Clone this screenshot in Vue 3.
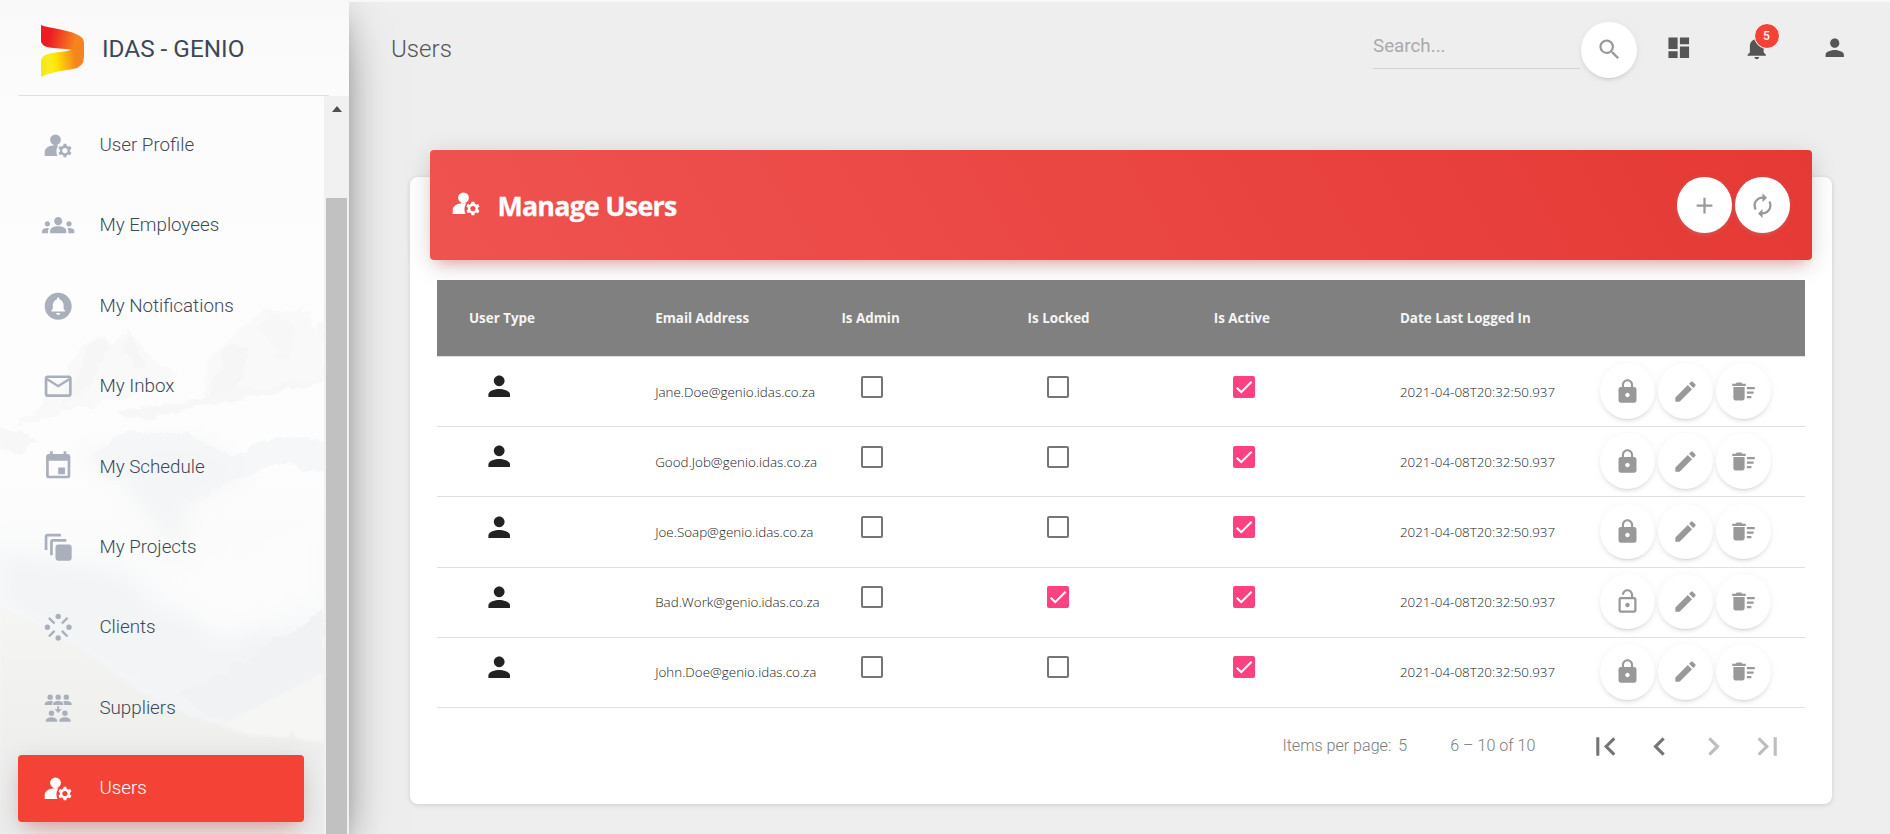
<script setup>
const icons = {
  manage: 'M10 12c-.22 0-.42-.03-.64-.03C6.6 11.97 2 13.4 2 17v3h9.54A6.9 6.9 0 0 1 10.7 16.5c0-1.6.55-3.1 1.45-4.28C11.4 12.06 10.7 12 10 12zM10 4a4 4 0 1 0 0 8 4 4 0 0 0 0-8zM20.75 16c0-.22-.03-.42-.06-.63l1.14-1.01-1-1.73-1.45.49c-.32-.27-.68-.48-1.08-.63L18 11h-2l-.3 1.49c-.4.15-.76.36-1.08.63l-1.45-.49-1 1.73 1.14 1.01c-.03.21-.06.41-.06.63s.03.42.06.63l-1.14 1.01 1 1.73 1.45-.49c.32.27.68.48 1.08.63L16 21h2l.3-1.49c.4-.15.76-.36 1.08-.63l1.45.49 1-1.73-1.14-1.01c.03-.21.06-.41.06-.63zM17 18c-1.1 0-2-.9-2-2s.9-2 2-2 2 .9 2 2-.9 2-2 2z',
  groups: 'M12 12.75c1.63 0 3.07.39 4.24.9 1.08.48 1.76 1.56 1.76 2.73V18H6v-1.61c0-1.18.68-2.26 1.76-2.73 1.17-.52 2.61-.91 4.24-.91zM4 13c1.1 0 2-.9 2-2s-.9-2-2-2-2 .9-2 2 .9 2 2 2zm1.13 1.1c-.37-.06-.74-.1-1.13-.1-.99 0-1.93.21-2.78.58A2.01 2.01 0 0 0 0 16.43V18h4.5v-1.61c0-.83.23-1.61.63-2.29zM20 13c1.1 0 2-.9 2-2s-.9-2-2-2-2 .9-2 2 .9 2 2 2zm4 3.43c0-.81-.48-1.53-1.22-1.85A6.95 6.95 0 0 0 20 14c-.39 0-.76.04-1.13.1.4.68.63 1.46.63 2.29V18H24v-1.57zM12 6c1.66 0 3 1.34 3 3s-1.34 3-3 3-3-1.34-3-3 1.34-3 3-3z',
  notify: 'M12 2C6.48 2 2 6.48 2 12s4.48 10 10 10 10-4.48 10-10S17.52 2 12 2zm0 16.5c-.83 0-1.5-.67-1.5-1.5h3c0 .83-.67 1.5-1.5 1.5zm5-2.5H7v-1l1-1v-2.61C8 9.27 9.03 7.47 11 7v-.5c0-.57.43-1 1-1s1 .43 1 1V7c1.97.47 3 2.28 3 4.39V14l1 1v1z',
  mail: 'M20 4H4c-1.1 0-1.99.9-1.99 2L2 18c0 1.1.9 2 2 2h16c1.1 0 2-.9 2-2V6c0-1.1-.9-2-2-2zm0 14H4V8l8 5 8-5v10zm-8-7L4 6h16l-8 5z',
  event: 'M17 13h-5v5h5v-5zM16 1v2H8V1H6v2H5c-1.11 0-1.99.9-1.99 2L3 19c0 1.1.89 2 2 2h14c1.1 0 2-.9 2-2V5c0-1.1-.9-2-2-2h-1V1h-2zm3 18H5V8h14v11z',
  copies: 'M22 12v8c0 1.1-.9 2-2 2h-8c-1.1 0-2-.9-2-2v-8c0-1.1.9-2 2-2h8c1.1 0 2 .9 2 2zM8 18H6V8c0-1.1.9-2 2-2h10v2H8v10zM4 14H2V4c0-1.1.9-2 2-2h10v2H4v10z',
  clients: 'M12 2a2 2 0 1 0 0 4 2 2 0 0 0 0-4zM12 18a2 2 0 1 0 0 4 2 2 0 0 0 0-4zM4 10a2 2 0 1 0 0 4 2 2 0 0 0 0-4zM20 10a2 2 0 1 0 0 4 2 2 0 0 0 0-4zM4.500 5.700 5.700 4.500 9.900 8.700 8.700 9.900zM18.300 4.500 19.500 5.700 15.300 9.900 14.100 8.700zM8.700 14.100 9.900 15.300 5.700 19.500 4.500 18.300zM15.300 14.100 19.500 18.300 18.300 19.500 14.100 15.300z',
  suppliers: 'M6 1.800a2 2 0 1 0 0 4 2 2 0 0 0 0-4zM12 1.800a2 2 0 1 0 0 4 2 2 0 0 0 0-4zM18 1.800a2 2 0 1 0 0 4 2 2 0 0 0 0-4zM2 9.700V8.900c0-1.300 2-2.200 4-2.200.9 0 1.700.1 2.400.4-.6.5-.9 1.100-.9 1.800v.8zM8.200 9.700V8.900c0-1.300 1.900-2.200 3.800-2.200s3.800.9 3.800 2.200v.8zM16.500 9.700V8.900c0-.7-.3-1.300-.9-1.800.7-.3 1.500-.4 2.400-.4 2 0 4 .9 4 2.200v.8zM11.300 10.500h1.400v2.300h2L12 15.500l-2.700-2.700h2zM7 13.800a2 2 0 1 0 0 4 2 2 0 0 0 0-4zM17 13.800a2 2 0 1 0 0 4 2 2 0 0 0 0-4zM2.800 22v-.8c0-1.300 2.100-2.500 4.200-2.500s4.200 1.200 4.200 2.500v.8zM12.800 22v-.8c0-1.300 2.100-2.500 4.200-2.500s4.200 1.200 4.200 2.500v.8z',
  search: 'M15.5 14h-.79l-.28-.27A6.47 6.47 0 0 0 16 9.500 6.500 6.500 0 1 0 9.500 16c1.610 0 3.090-.59 4.230-1.570l.27.28v.79l5 4.990L20.490 19l-4.990-5zm-6 0C7.010 14 5 11.990 5 9.500S7.010 5 9.500 5 14 7.010 14 9.500 11.990 14 9.500 14z',
  dashboard: 'M3 13h8V3H3v10zm0 8h8v-6H3v6zm10 0h8V11h-8v10zm0-18v6h8V3h-8z',
  bell: 'M12 22c1.100 0 2-.9 2-2h-4c0 1.100.89 2 2 2zm6-6v-5c0-3.070-1.640-5.640-4.500-6.320V4c0-.83-.67-1.500-1.500-1.500s-1.500.67-1.500 1.500v.68C7.630 5.360 6 7.920 6 11v5l-2 2v1h16v-1l-2-2z',
  person: 'M12 12c2.210 0 4-1.790 4-4s-1.790-4-4-4-4 1.790-4 4 1.790 4 4 4zm0 2c-2.670 0-8 1.340-8 4v2h16v-2c0-2.660-5.330-4-8-4z',
  add: 'M19 13h-6v6h-2v-6H5v-2h6V5h2v6h6v2z',
  renew: 'M12 6v3l4-4-4-4v3c-4.420 0-8 3.580-8 8 0 1.570.46 3.030 1.240 4.260L6.700 14.800A5.870 5.870 0 0 1 6 12c0-3.310 2.690-6 6-6zm6.760 1.740L17.300 9.200c.44.84.7 1.790.7 2.800 0 3.310-2.690 6-6 6v-3l-4 4 4 4v-3c4.420 0 8-3.580 8-8 0-1.570-.46-3.030-1.240-4.260z',
  lock: 'M18 8h-1V6c0-2.760-2.240-5-5-5S7 3.240 7 6v2H6c-1.100 0-2 .9-2 2v10c0 1.100.9 2 2 2h12c1.100 0 2-.9 2-2V10c0-1.100-.9-2-2-2zm-6 9c-1.100 0-2-.9-2-2s.9-2 2-2 2 .9 2 2-.9 2-2 2zm3.100-9H8.900V6c0-1.710 1.390-3.100 3.100-3.100s3.100 1.390 3.100 3.100v2z',
  unlock: 'M12 17c1.100 0 2-.9 2-2s-.9-2-2-2-2 .9-2 2 .9 2 2 2zm6-9h-1V6c0-2.760-2.240-5-5-5S7 3.240 7 6h1.900c0-1.710 1.390-3.100 3.100-3.100s3.100 1.390 3.100 3.100v2H6c-1.100 0-2 .9-2 2v10c0 1.100.9 2 2 2h12c1.100 0 2-.9 2-2V10c0-1.100-.9-2-2-2zm0 12H6V10h12v10z',
  edit: 'M3 17.250V21h3.750L17.810 9.940l-3.750-3.750L3 17.250zM20.710 7.040a1 1 0 0 0 0-1.410l-2.340-2.340a1 1 0 0 0-1.410 0l-1.830 1.830 3.750 3.750 1.830-1.830z',
  sweep: 'M15 16h4v2h-4zm0-8h7v2h-7zm0 4h6v2h-6zM3 18c0 1.100.9 2 2 2h6c1.100 0 2-.9 2-2V8H3v10zM14 5h-3l-1-1H6L5 5H2v2h12z',
  first: 'M18.410 16.590L13.820 12l4.590-4.590L17 6l-6 6 6 6zM6 6h2v12H6z',
  prev: 'M15.410 7.410L14 6l-6 6 6 6 1.410-1.410L10.830 12z',
  next: 'M10 6L8.590 7.410 13.170 12l-4.580 4.590L10 18l6-6z',
  last: 'M5.590 7.410L10.180 12l-4.590 4.590L7 18l6-6-6-6zM16 6h2v12h-2z',
}

const menu = [
  { label: 'User Profile', icon: 'manage' },
  { label: 'My Employees', icon: 'groups' },
  { label: 'My Notifications', icon: 'notify' },
  { label: 'My Inbox', icon: 'mail' },
  { label: 'My Schedule', icon: 'event' },
  { label: 'My Projects', icon: 'copies' },
  { label: 'Clients', icon: 'clients' },
  { label: 'Suppliers', icon: 'suppliers' },
  { label: 'Users', icon: 'manage', active: true },
]

const columns = ['User Type', 'Email Address', 'Is Admin', 'Is Locked', 'Is Active', 'Date Last Logged In', '']

const stamp = '2021-04-08T20:32:50.937'
const users = [
  { email: 'Jane.Doe@genio.idas.co.za', locked: false },
  { email: 'Good.Job@genio.idas.co.za', locked: false },
  { email: 'Joe.Soap@genio.idas.co.za', locked: false },
  { email: 'Bad.Work@genio.idas.co.za', locked: true },
  { email: 'John.Doe@genio.idas.co.za', locked: false },
].map((u) => ({ ...u, flags: [false, u.locked, true], date: stamp }))

const pager = [
  { icon: 'first', off: false },
  { icon: 'prev', off: false },
  { icon: 'next', off: true },
  { icon: 'last', off: true },
]
</script>

<template>
  <div class="page">
    <aside class="sidebar">
      <svg class="scenery" viewBox="0 0 349 832" preserveAspectRatio="none">
        <defs>
          <linearGradient id="sky" x1="0" y1="0" x2="0" y2="1">
            <stop offset="0" stop-color="#f9f9f9" />
            <stop offset="0.13" stop-color="#fcfcfc" />
            <stop offset="0.55" stop-color="#fdfdfd" />
            <stop offset="0.75" stop-color="#f8f9fa" />
            <stop offset="1" stop-color="#eeeeee" />
          </linearGradient>
          <linearGradient id="slope" x1="0" y1="0" x2="0" y2="1">
            <stop offset="0" stop-color="#f5f5f3" />
            <stop offset="0.6" stop-color="#efefee" />
            <stop offset="1" stop-color="#ebebeb" />
          </linearGradient>
          <filter id="crag" x="-10%" y="-10%" width="120%" height="120%">
            <feTurbulence type="fractalNoise" baseFrequency="0.05" numOctaves="4" seed="7" result="n" />
            <feDisplacementMap in="SourceGraphic" in2="n" scale="16" xChannelSelector="R" yChannelSelector="G" />
            <feGaussianBlur stdDeviation="0.7" />
          </filter>
          <filter id="soft"><feGaussianBlur stdDeviation="1.5" /></filter>
          <filter id="mist"><feGaussianBlur stdDeviation="11" /></filter>
        </defs>
        <rect width="349" height="832" fill="url(#sky)" />
        <g filter="url(#crag)">
          <path d="M14 424 40 402 66 372 82 348 102 331 114 338 127 330 140 342 160 363 182 372 150 388 96 402 50 415z" fill="#f9f9f9" />
          <path d="M90 345 104 334 112 342 100 362 84 390 60 405z" fill="#f6f6f6" />
          <path d="M127 332 140 350 150 368 132 362 124 350z" fill="#f6f6f6" />
          <path d="M204 365 222 345 240 328 260 308 306 308 314 325 324 318V382L270 384 230 400 206 398z" fill="#f9f9f9" />
          <path d="M212 380 230 342 250 350 236 388 214 398z" fill="#f6f6f6" />
          <path d="M262 322 276 312 296 330 286 360 270 345z" fill="#f7f7f7" />
          <path d="M120 410 200 396 324 376V382L220 402 130 418z" fill="#f7f7f7" />
          <path d="M90 452 130 430 190 430 212 448 232 454 270 434 324 440V470L280 462 240 474 190 500 150 470 110 480z" fill="#f6f7f8" />
          <path d="M0 426 24 428 40 440 20 452 0 448z" fill="#f7f7f7" />
        </g>
        <g filter="url(#mist)">
          <path d="M70 450 200 440 250 470 190 500 180 560 120 480z" fill="#f4f5f6" />
          <path d="M0 550 120 570 160 610 324 640V730L190 720 60 640 0 600z" fill="#f2f4f6" />
          <path d="M150 570 324 520V590L220 640z" fill="#fcfcfc" />
        </g>
        <path d="M178 695 250 655 300 622 324 606V700L230 724z" fill="#f0f2f4" filter="url(#crag)" />
        <path d="M224 722 324 670V742H250z" fill="#f6f6f5" filter="url(#soft)" />
        <path d="M0 604 40 624 90 652 140 690 190 714 250 733 288 736 292 728 296 737 324 740V832H0z" fill="url(#slope)" filter="url(#soft)" />
      </svg>
      <div class="brand">
        <svg class="logo" viewBox="0 0 43 52">
          <defs>
            <linearGradient id="redBand" x1="0" x2="1" y1="0" y2="0.15">
              <stop offset="0.25" stop-color="#ed1c24" />
              <stop offset="0.85" stop-color="#f5831f" />
            </linearGradient>
            <linearGradient id="yellowBand" x1="0" x2="1" y1="0.1" y2="0">
              <stop offset="0" stop-color="#f3ea12" />
              <stop offset="0.17" stop-color="#fbed21" />
              <stop offset="0.3" stop-color="#ffe600" />
              <stop offset="0.75" stop-color="#f6851f" />
            </linearGradient>
          </defs>
          <path d="M43 17V32Q43 42 32 44C19 46 8 48 0 52V35Q2 30 7 29C15 27 26 27 30 24.500z" fill="url(#yellowBand)" />
          <path d="M0 0C6 3 24 4 35 9Q43 12 43 18V30Q40 26 30 24.500C22 23.500 14 23.500 8 22.500Q2 21.500 0 17z" fill="url(#redBand)" />
        </svg>
        <span>IDAS - GENIO</span>
      </div>
      <div class="scroller">
        <nav class="menu">
          <a v-for="m in menu" :key="m.label" class="item" :class="{ active: m.active }">
            <svg class="menu-icon" viewBox="0 0 24 24"><path :d="icons[m.icon]" fill-rule="evenodd" /></svg>
            <span>{{ m.label }}</span>
          </a>
        </nav>
        <div class="track">
          <i class="arrow"></i>
          <i class="thumb"></i>
        </div>
      </div>
    </aside>

    <main class="main">
      <header class="topbar">
        <h1>Users</h1>
        <div class="search">Search...</div>
        <button class="round"><svg viewBox="0 0 24 24"><path :d="icons.search" /></svg></button>
        <div class="tools">
          <svg viewBox="0 0 24 24"><path :d="icons.dashboard" /></svg>
          <div class="alerts">
            <svg viewBox="0 0 24 24"><path :d="icons.bell" /></svg>
            <span class="badge">5</span>
          </div>
          <svg viewBox="0 0 24 24"><path :d="icons.person" /></svg>
        </div>
      </header>

      <section class="card">
        <div class="banner">
          <svg class="banner-icon" viewBox="0 0 24 24"><path :d="icons.manage" fill-rule="evenodd" /></svg>
          <h2>Manage Users</h2>
          <button class="round"><svg viewBox="0 0 24 24"><path :d="icons.add" /></svg></button>
          <button class="round"><svg viewBox="0 0 24 24"><path :d="icons.renew" /></svg></button>
        </div>
        <div class="table">
          <div class="row head">
            <div v-for="c in columns" :key="c">{{ c }}</div>
          </div>
          <div v-for="u in users" :key="u.email" class="row">
            <div class="type"><svg viewBox="0 0 24 24"><path :d="icons.person" /></svg></div>
            <div class="txt">{{ u.email }}</div>
            <div v-for="(f, i) in u.flags" :key="i" class="flag">
              <span class="box" :class="{ on: f }">
                <svg v-if="f" viewBox="0 0 24 24"><path d="M4.100 12.700 9 17.600 20.300 6.300" /></svg>
              </span>
            </div>
            <div class="txt">{{ u.date }}</div>
            <div class="actions">
              <button class="round"><svg viewBox="0 0 24 24"><path :d="u.locked ? icons.unlock : icons.lock" /></svg></button>
              <button class="round"><svg viewBox="0 0 24 24"><path :d="icons.edit" /></svg></button>
              <button class="round"><svg viewBox="0 0 24 24"><path :d="icons.sweep" /></svg></button>
            </div>
          </div>
        </div>
        <footer class="pager">
          <span class="label">Items per page:</span>
          <span class="label size">5</span>
          <span class="label range">6 – 10 of 10</span>
          <span v-for="p in pager" :key="p.icon" class="step" :class="{ off: p.off }">
            <svg viewBox="0 0 24 24"><path :d="icons[p.icon]" /></svg>
          </span>
        </footer>
      </section>
    </main>
  </div>
</template>

<style>
body { margin: 0; overflow: hidden; }
</style>

<style scoped>
* { box-sizing: border-box; }
.page {
  display: flex;
  width: 1890px;
  height: 834px;
  overflow: hidden;
  background: #eeeeee;
  border-top: 2px solid #dadcdb;
  border-image: linear-gradient(#f8f8f8 50%, #dadcdb 50%) 2;
  font-family: Roboto, sans-serif;
}
.sidebar {
  position: relative;
  z-index: 2;
  flex: none;
  width: 349px;
  height: 832px;
  display: flex;
  flex-direction: column;
  color: #3c4858;
  box-shadow: 0 21px 51px -16px rgba(0, 0, 0, .56), 0 5px 33px 0 rgba(0, 0, 0, .12), 0 11px 13px -7px rgba(0, 0, 0, .2);
}
.scenery { position: absolute; inset: 0; width: 349px; height: 832px; }
.brand {
  position: relative;
  height: 94px;
  margin: 0 20px 0 18px;
  padding: 23px 0 0 23px;
  display: flex;
  align-items: flex-start;
  border-bottom: 1px solid #e0e0e0;
  font-size: 24.300px;
  line-height: 48px;
}
.logo { width: 43px; height: 52px; margin-right: 18px; }
.scroller { position: relative; flex: 1; display: flex; justify-content: space-between; }
.menu { display: flex; flex-direction: column; gap: 13.400px; padding: 16px 0 0 18px; }
.item {
  flex: none;
  width: 286px;
  height: 67px;
  display: flex;
  align-items: center;
  gap: 24.600px;
  padding: 0 0 .8px 24.400px;
  border-radius: 4px;
  font-size: 18.800px;
  font-weight: 300;
}
.menu-icon { width: 32.400px; height: 32.400px; fill: #a9afbb; }
.item.active {
  color: #fff;
  background: #f44336;
  box-shadow: 0 16px 27px -13px rgba(244, 67, 54, .28), 0 5px 27px 0 rgba(0, 0, 0, .12), 0 9px 11px -7px rgba(244, 67, 54, .2);
}
.item.active .menu-icon { fill: #fff; }
.track {
  width: 25px;
  display: flex;
  flex-direction: column;
  align-items: center;
  background: #f1f1f1;
}
.arrow {
  margin-top: 10px;
  border: 5.500px solid transparent;
  border-top: 0;
  border-bottom: 6px solid #505050;
}
.thumb { flex: 1; width: 21px; margin-top: 86px; background: #c1c1c1; }

.main { flex: 1; }
.topbar { height: 148px; display: flex; padding: 20px 0 0 42px; }
h1 { flex: 1; margin: 0; font-size: 24.100px; line-height: 54px; font-weight: 300; color: #555; }
.search {
  width: 207px;
  height: 47px;
  margin-right: 1px;
  border-bottom: 1px solid #d2d2d2;
  font-size: 18.800px;
  line-height: 49px;
  color: #aaa;
}
.round {
  flex: none;
  width: 55px;
  height: 55.500px;
  padding: 0;
  border: 0;
  border-radius: 50%;
  background: #fff;
  display: flex;
  align-items: center;
  justify-content: center;
  box-shadow: 0 3px 3px 0 rgba(153, 153, 153, .14), 0 4px 1px -3px rgba(153, 153, 153, .2), 0 1px 7px 0 rgba(153, 153, 153, .12);
}
.topbar .round { width: 56px; }
.round svg { width: 27px; height: 27px; fill: #999; }
.tools { display: flex; gap: 50.500px; padding: 12px 42px 0 27.500px; }
.tools svg { display: block; width: 27.500px; height: 27.500px; fill: #555; }
.alerts { position: relative; }
.badge {
  position: absolute;
  left: 11px;
  top: -11px;
  width: 26px;
  height: 26px;
  border: 1px solid #fff;
  border-radius: 50%;
  background: #f44336;
  color: #fff;
  font-size: 12px;
  font-weight: 500;
  line-height: 25px;
  text-align: center;
}

.card {
  width: 1422px;
  height: 627px;
  margin: 27px 0 0 61px;
  display: flex;
  flex-direction: column;
  border-radius: 8px;
  background: #fff;
  box-shadow: 0 1px 5px 0 rgba(0, 0, 0, .14);
}
.banner {
  flex: none;
  height: 110px;
  margin: -27px 20px 20px;
  padding: 0 22px 0 19.500px;
  display: flex;
  align-items: center;
  gap: 3px;
  border-radius: 4px;
  background: linear-gradient(60deg, #ef5350, #e53935);
  box-shadow: 0 5px 27px 0 rgba(0, 0, 0, .14), 0 9px 13px -7px rgba(244, 67, 54, .4);
}
.banner-icon { width: 32.400px; height: 32.400px; fill: #fff; margin: 0 12.500px 3px 0; }
h2 {
  flex: 1;
  margin: 0;
  padding-top: 2px;
  color: #fff;
  font: 700 26.800px/36px "Open Sans", sans-serif;
  letter-spacing: -0.750px;
  -webkit-text-stroke: 0.300px #fff;
}
.table { margin: 0 27px; position: relative; }
.row {
  height: 70.200px;
  display: grid;
  grid-template-columns: repeat(6, 186.200px) 1fr;
  align-items: center;
  padding: 0 0 1.200px 32px;
  border-bottom: 1px solid #e0e0e0;
  font-family: "Open Sans", sans-serif;
  font-size: 13.400px;
  color: #222;
}
.row.head { height: 77px; padding-bottom: 0; background: #808080; background-clip: padding-box; color: #f5f5f5; font-weight: 700; }
.txt { font-weight: 300; padding-top: 1px; }
.type { padding: 0 0 9px 14px; }
.type svg { display: block; width: 32.400px; height: 32.400px; fill: #222; }
.flag { padding: 0 0 9px 19.500px; }
.box { display: block; width: 22px; height: 22px; border: 2px solid #757575; border-radius: 2px; }
.box.on { border: 0; background: #ff4081; }
.box svg { display: block; width: 22px; height: 22px; fill: none; stroke: #fff; stroke-width: 2.300; }
.actions { display: flex; gap: 3px; padding: 0 0 0 14px; }
.pager {
  display: flex;
  align-items: center;
  justify-content: flex-end;
  height: 77px;
  padding-right: 38px;
  font-size: 16.100px;
  font-weight: 300;
  color: #7c7c7c;
}
.label { padding-bottom: 2px; }
.size { margin-left: 7px; }
.range { margin: 0 43px; }
.step { width: 53.900px; display: flex; justify-content: center; }
.step svg { width: 37px; height: 37px; fill: #757575; }
.step.off svg { fill: #bdbdbd; }
</style>
